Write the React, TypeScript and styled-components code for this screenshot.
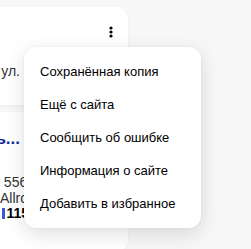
import React from 'react';
import styled, { createGlobalStyle } from 'styled-components';

const GlobalStyle = createGlobalStyle`
  html, body {
    margin: 0;
    padding: 0;
    background: #f7f7f7;
    font-family: Arial, "Liberation Sans", sans-serif;
  }
`;

const menuItems = [
  'Сохранённая копия',
  'Ещё с сайта',
  'Сообщить об ошибке',
  'Информация о сайте',
  'Добавить в избранное',
];

function App() {
  return (
    <Page>
      <GlobalStyle />
      <Results>
        <Card $height={98}>
          <CardHead>
            <MoreButton aria-label="Ещё">
              <svg width="4" height="12" viewBox="0 0 4 12">
                <circle cx="2" cy="2" r="1.6" fill="#000" />
                <circle cx="2" cy="6" r="1.6" fill="#000" />
                <circle cx="2" cy="10" r="1.6" fill="#000" />
              </svg>
            </MoreButton>
          </CardHead>
          <Line $top={25}>
            <Tail>г. Москва, ул.</Tail>
          </Line>
        </Card>
        <Card $height={140}>
          <Line $top={17}>
            <TitleTail>Купить...</TitleTail>
          </Line>
          <Info>
            <Tail $shift={-9}>+7 (495) 5561</Tail>
            <Tail $shift={-2}>Allrо</Tail>
            <Phone>
              <Mark />
              <Tail $bold $shift={-3}>115</Tail>
            </Phone>
          </Info>
        </Card>
      </Results>
      <Menu>
        {menuItems.map((item) => (
          <MenuItem key={item}>{item}</MenuItem>
        ))}
      </Menu>
    </Page>
  );
}

const Page = styled.div`
  position: relative;
  width: 251px;
  height: 249px;
  overflow: hidden;
`;
const Results = styled.div`
  display: flex;
  flex-direction: column;
  gap: 7px;
  padding-top: 7px;
  width: 128px;
`;
const Card = styled.div<{ $height: number }>`
  height: ${(p) => p.$height}px;
  background: #fff;
  border-radius: 0 12px 12px 0;
  box-shadow: 0 1px 3px rgba(0, 0, 0, 0.05);
  overflow: hidden;
`;
const CardHead = styled.div`
  display: flex;
  justify-content: flex-end;
  padding: 18px 14px 0 0;
`;
const MoreButton = styled.button`
  display: flex;
  align-items: center;
  justify-content: center;
  width: 6px;
  height: 14px;
  padding: 0;
  border: 0;
  background: none;
`;
const Line = styled.div<{ $top: number }>`
  display: flex;
  justify-content: flex-end;
  width: 20px;
  margin-top: ${(p) => p.$top}px;
  white-space: nowrap;
`;
const Tail = styled.span<{ $bold?: boolean; $shift?: number }>`
  font-size: 14px;
  line-height: 15.5px;
  color: ${(p) => (p.$bold ? '#000' : '#333')};
  font-weight: ${(p) => (p.$bold ? 700 : 400)};
  margin-right: ${(p) => p.$shift ?? 0}px;
`;
const TitleTail = styled.span`
  font-size: 17px;
  line-height: 20px;
  font-weight: 700;
  color: #13299e;
`;
const Info = styled.div`
  display: flex;
  flex-direction: column;
  align-items: flex-end;
  width: 26px;
  margin-top: 26px;
  white-space: nowrap;
`;
const Phone = styled.div`
  display: flex;
  align-items: center;
  gap: 1px;
`;
const Mark = styled.span`
  width: 3px;
  height: 11px;
  background: #3a5cd8;
`;
const Menu = styled.ul`
  position: absolute;
  left: 24px;
  top: 47px;
  width: 177px;
  margin: 0;
  padding: 8px 0;
  list-style: none;
  background: #fff;
  border-radius: 12px;
  box-shadow: 0 6px 20px rgba(0, 0, 0, 0.13), 0 0 2px rgba(0, 0, 0, 0.08);
`;
const MenuItem = styled.li`
  height: 33px;
  padding-left: 16px;
  display: flex;
  align-items: center;
  font-size: 13px;
  color: #000;
  white-space: nowrap;
`;

export default App;
